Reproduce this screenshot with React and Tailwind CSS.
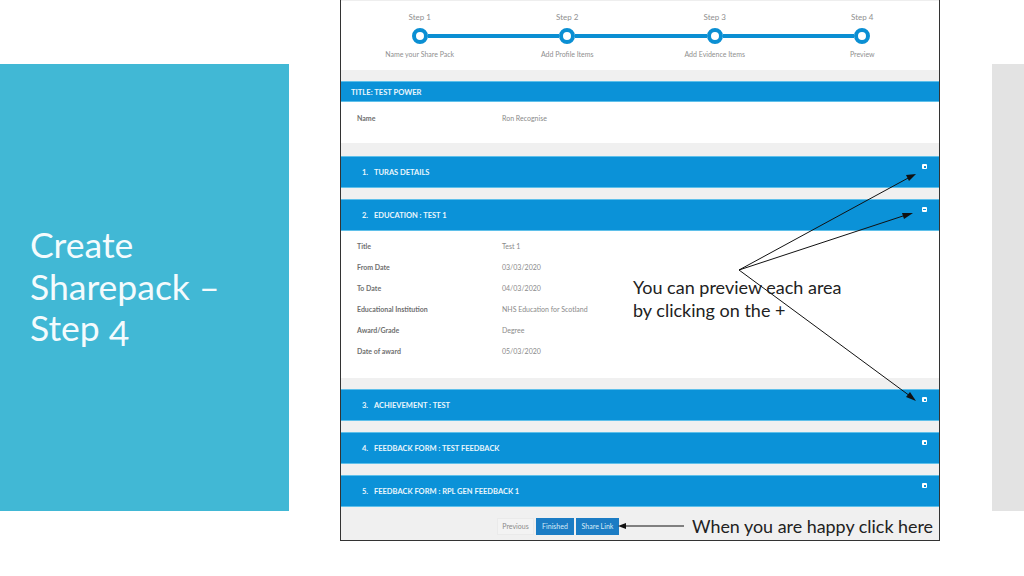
const steps = [
  { step: 'Step 1', label: 'Name your Share Pack' },
  { step: 'Step 2', label: 'Add Profile Items' },
  { step: 'Step 3', label: 'Add Evidence Items' },
  { step: 'Step 4', label: 'Preview' },
]

const educationRows = [
  ['Title', 'Test 1'],
  ['From Date', '03/03/2020'],
  ['To Date', '04/03/2020'],
  ['Educational Institution', 'NHS Education for Scotland'],
  ['Award/Grade', 'Degree'],
  ['Date of award', '05/03/2020'],
]

function Stepper() {
  return (
    <div className="h-[70px] bg-white pl-[5px] pr-[3px] pt-[10px] grid grid-cols-4 border-t border-[#eeeeee]">
      {steps.map((s, i) => (
        <div key={s.step} className="flex flex-col items-center text-[#8f8f8f] text-[7px] leading-[12px]">
          <p className="text-[8px]">{s.step}</p>
          <div className="w-full flex items-center mt-[5px] h-[16px]">
            <div className={i === 0 ? 'flex-1 h-[4px]' : 'flex-1 h-[4px] bg-[#0b8fd3]'} />
            <div className="w-[16px] h-[16px] shrink-0 rounded-full border-[4px] border-[#0b8fd3] bg-white" />
            <div className={i === 3 ? 'flex-1 h-[4px]' : 'flex-1 h-[4px] bg-[#0b8fd3]'} />
          </div>
          <p className="mt-[4px] whitespace-nowrap">{s.label}</p>
        </div>
      ))}
    </div>
  )
}

function Bar({ number, title, minus }) {
  return (
    <div className="h-[32px] bg-[#0b92d8] border-y border-[#5fc0ea] flex items-start text-[#eaf6fc] font-bold text-[7.5px] pl-[21px] pr-[12px]">
      <span className="w-[12px] mt-[10px] leading-[12px]">{number}.</span>
      <span className="mt-[10px] leading-[12px]">{title}</span>
      <span className="ml-auto mt-[7px] w-[5px] h-[5px] rounded-[1px] bg-white flex items-center justify-center">
        <span className={minus ? 'w-[3px] h-[1px] bg-[#0b92d8]' : 'w-[2px] h-[2px] bg-[#0b92d8]'} />
      </span>
    </div>
  )
}

function DetailRow({ label, value }) {
  return (
    <div className="h-[21px] flex items-center text-[7px] pl-[16px]">
      <span className="w-[145px] font-bold text-[#6f6f6f]">{label}</span>
      <span className="text-[#8a8a8a]">{value}</span>
    </div>
  )
}

function SharePackShot() {
  return (
    <div className="relative w-[600px] h-[541px] ml-[51px] shrink-0 border-x border-b border-[#333333] bg-[#f0f0f0] font-['Lato',sans-serif]">
      <Stepper />
      <div className="h-[11px]" />
      <div className="h-[21px] bg-[#0b92d8] border-y border-[#5fc0ea] text-[#eaf6fc] font-bold text-[7.6px] leading-[21px] pl-[10px]">
        TITLE: TEST POWER
      </div>
      <div className="h-[41px] bg-white pl-[16px] pt-[10px] flex text-[7px] leading-[12px]">
        <span className="w-[145px] font-bold text-[#6f6f6f]">Name</span>
        <span className="text-[#8a8a8a]">Ron Recognise</span>
      </div>
      <div className="h-[13px]" />
      <Bar number="1" title="TURAS DETAILS" />
      <div className="h-[11px]" />
      <Bar number="2" title="EDUCATION : TEST 1" minus />
      <div className="h-[147px] bg-white pt-[5px]">
        {educationRows.map(([label, value]) => (
          <DetailRow key={label} label={label} value={value} />
        ))}
      </div>
      <div className="h-[11px]" />
      <Bar number="3" title="ACHIEVEMENT : TEST" />
      <div className="h-[11px]" />
      <Bar number="4" title="FEEDBACK FORM : TEST FEEDBACK" />
      <div className="h-[11px]" />
      <Bar number="5" title="FEEDBACK FORM : RPL GEN FEEDBACK 1" />
      <div className="flex pl-[156px] pt-[11px] gap-[2px] text-[7px]">
        <button className="w-[37px] h-[17px] bg-[#f3f3f3] border border-[#eaeaea] text-[#8a8a8a]">Previous</button>
        <button className="w-[38px] h-[17px] bg-[#1b7cc4] text-[#d8ecf8]">Finished</button>
        <button className="w-[43px] h-[17px] bg-[#1b7cc4] text-[#d8ecf8]">Share Link</button>
      </div>
    </div>
  )
}

function Annotations() {
  return (
    <>
      <svg className="absolute inset-0 pointer-events-none" width="1024" height="576" viewBox="0 0 1024 576">
        <g stroke="#111111" strokeWidth="1" fill="none">
          <line x1="739" y1="270" x2="910" y2="177" />
          <line x1="739" y1="270" x2="906" y2="215" />
          <line x1="739" y1="270" x2="910" y2="396" />
          <line x1="684" y1="526" x2="625" y2="526" />
        </g>
        <g fill="#111111">
          <polygon points="916,174 906,175 909,181" />
          <polygon points="913,213 902,213 904,219" />
          <polygon points="916,401 906,397 910,392" />
          <polygon points="618,526 626,523 626,529" />
        </g>
      </svg>
      <div className="absolute left-[633px] top-[276px] text-[18px] leading-[23px] text-[#222222] font-['Lato',sans-serif]">
        <p>You can preview each area</p>
        <p>by clicking on the +</p>
      </div>
      <p className="absolute left-[692px] top-[515px] text-[17.9px] leading-[23px] text-[#222222] font-['Lato',sans-serif]">
        When you are happy click here
      </p>
    </>
  )
}

export default function App() {
  return (
    <div className="relative w-[1024px] h-[576px] overflow-hidden bg-white flex items-start">
      <div className="w-[289px] h-[447px] mt-[64px] shrink-0 bg-[#41b8d5] pl-[30px] pt-[160px] text-[#f4fbfd] text-[35.5px] leading-[41.5px] font-['Lato',sans-serif]">
        <p>Create</p>
        <p>Sharepack –</p>
        <p>Step <span className="inline-block translate-y-[5px]">4</span></p>
      </div>
      <SharePackShot />
      <div className="w-[32px] h-[447px] mt-[64px] ml-[52px] shrink-0 bg-[#e3e3e3]" />
      <Annotations />
    </div>
  )
}
